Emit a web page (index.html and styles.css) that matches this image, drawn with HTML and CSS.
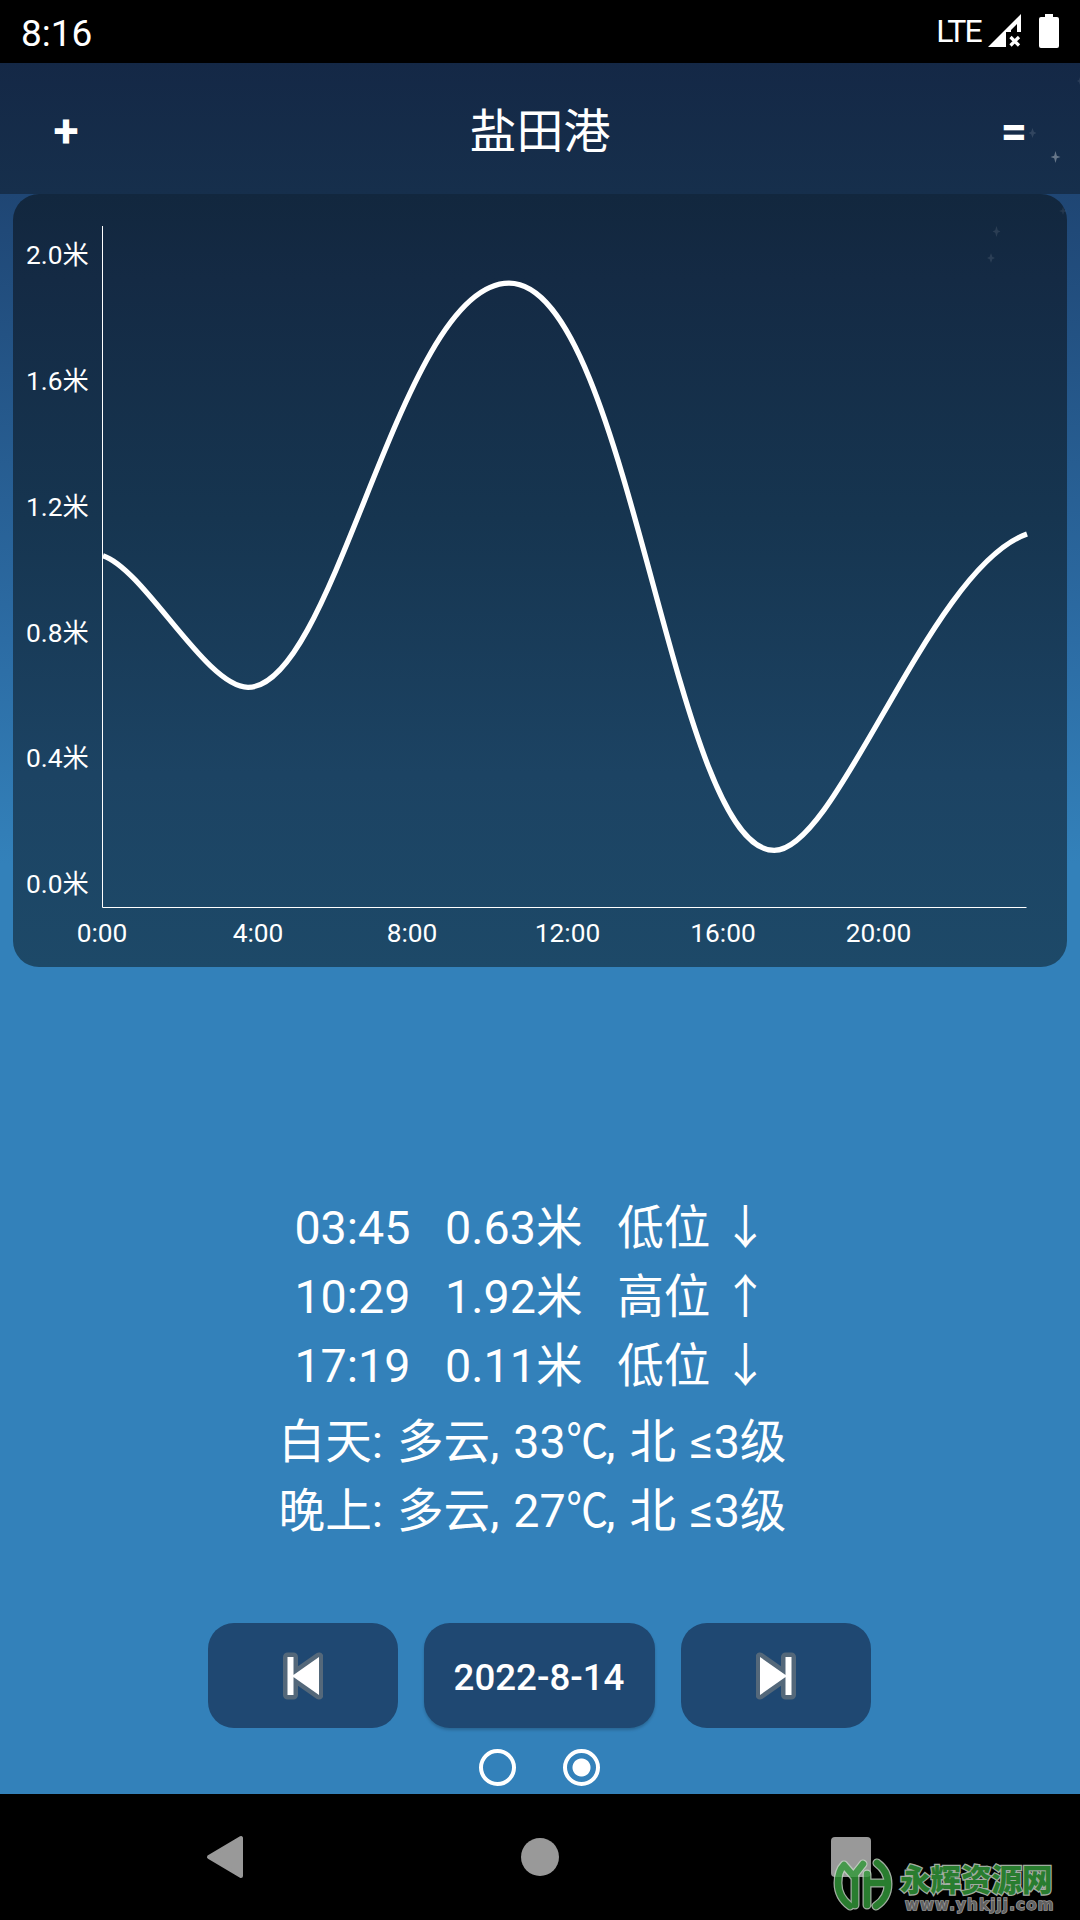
FILE: index.html
```html
<!DOCTYPE html>
<html lang="zh-CN">
<head>
    <meta charset="UTF-8">
    <meta name="viewport" content="width=device-width, initial-scale=1.0">
    <title>盐田港</title>
    <link rel="stylesheet" href="styles.css">
</head>
<body>
    <div class="statusbar">
        <span class="clock">8:16</span>
        <span class="lte">LTE</span>
        <svg class="signal" width="33" height="33" viewBox="0 0 33 33">
            <path d="M0 33L33 0V18H29V10L23 16V18H18V33Z" fill="#fff"/>
            <path d="M22.5 23L31 31.5M31 23L22.5 31.5" stroke="#fff" stroke-width="3.2"/>
        </svg>
        <svg class="battery" width="20" height="34" viewBox="0 0 20 34">
            <path d="M6 0H14V3H18Q20 3 20 5V32Q20 34 18 34H2Q0 34 0 32V5Q0 3 2 3H6Z" fill="#fff"/>
        </svg>
    </div>

    <div class="app">
        <div class="header">
            <button type="button" class="icon-btn">+</button>
            <h1>盐田港</h1>
            <button type="button" class="icon-btn">=</button>
        </div>

        <!-- Tide chart -->
        <div class="chart">
            <svg width="1054" height="773" viewBox="13 194 1054 773">
                <g class="axis">
                    <path d="M102.5 226V907.5H1026.5"/>
                </g>
                <g class="ylabels">
                    <text x="26" y="264">2.0米</text>
                    <text x="26" y="390">1.6米</text>
                    <text x="26" y="516">1.2米</text>
                    <text x="26" y="642">0.8米</text>
                    <text x="26" y="767">0.4米</text>
                    <text x="26" y="893">0.0米</text>
                </g>
                <g class="xlabels">
                    <text x="102" y="942">0:00</text>
                    <text x="258" y="942">4:00</text>
                    <text x="412" y="942">8:00</text>
                    <text x="567.5" y="942">12:00</text>
                    <text x="723" y="942">16:00</text>
                    <text x="878.5" y="942">20:00</text>
                </g>
                <path class="curve" d="M103 555.7C145 570 206 687.3 248 687.3C336 687.3 400 283.2 509 283.2C629 283.2 672 850.4 774.2 850.4C838 850.4 930 568 1027 534"/>
            </svg>
        </div>

        <div class="tides">
            <p>03:45&nbsp;&nbsp; 0.63米&nbsp;&nbsp; 低位 ↓</p>
            <p>10:29&nbsp;&nbsp; 1.92米&nbsp;&nbsp; 高位 ↑</p>
            <p>17:19&nbsp;&nbsp; 0.11米&nbsp;&nbsp; 低位 ↓</p>
        </div>
        <div class="weather">
            <p>白天: 多云, 33<span class="unit">℃</span>, 北 ≤3级</p>
            <p>晚上: 多云, 27<span class="unit">℃</span>, 北 ≤3级</p>
        </div>

        <div class="controls">
            <button type="button" class="btn">
                <svg width="40" height="48" viewBox="0 0 40 48">
                    <path class="halo" d="M4.5 5H10.5V43H4.5ZM9 24L36 5V43Z"/>
                    <path d="M4.5 5H10.5V43H4.5ZM9 24L36 5V43Z" fill="#fff"/>
                </svg>
            </button>
            <button type="button" class="btn date">2022-8-14</button>
            <button type="button" class="btn">
                <svg width="40" height="48" viewBox="0 0 40 48">
                    <path class="halo" d="M35.5 5H29.5V43H35.5ZM31 24L4 5V43Z"/>
                    <path d="M35.5 5H29.5V43H35.5ZM31 24L4 5V43Z" fill="#fff"/>
                </svg>
            </button>
        </div>
        <div class="pager">
            <span class="dot"></span>
            <span class="dot active"></span>
        </div>

        <svg class="stars" width="100" height="230" viewBox="980 63 100 230">
            <g fill="#fff">
                <path opacity=".35" d="M1055.5 151L1056.8 155.7L1060.5 157L1056.8 158.3L1055.5 163L1054.2 158.3L1050.5 157L1054.2 155.7Z"/>
                <path opacity=".12" d="M1032.5 128L1033.8 131.7L1036.5 133L1033.8 134.3L1032.5 138L1031.2 134.3L1028.5 133L1031.2 131.7Z"/>
                <path opacity=".1" d="M996.5 226L997.8 230.2L1000.5 231.5L997.8 232.8L996.5 237L995.2 232.8L992.5 231.5L995.2 230.2Z"/>
                <path opacity=".1" d="M991 253L992.3 256.7L995 258L992.3 259.3L991 263L989.7 259.3L987 258L989.7 256.7Z"/>
                <path opacity=".08" d="M1063 207L1064 210L1067 211L1064 212L1063 215L1062 212L1059 211L1062 210Z"/>
                <path opacity=".1" d="M1080 77L1079 80L1077 81L1079 82L1080 85Z"/>
            </g>
        </svg>
    </div>

    <div class="navbar">
        <svg width="38" height="44" viewBox="0 0 38 44">
            <path d="M3 22L35 3V41Z" fill="#999" stroke="#999" stroke-width="4" stroke-linejoin="round"/>
        </svg>
        <span class="home"></span>
        <span class="recent"></span>
    </div>

    <!-- Site mark in the corner -->
    <div class="sitemark">
        <svg width="62" height="54" viewBox="832 1858 62 54">
            <g class="mark-edge">
                <path d="M850 1906Q838 1897 838 1883Q838 1871 844 1865L853.5 1876L863 1864"/>
                <path d="M855 1877V1905M867 1874V1905M867 1883H886M877 1863Q888 1871 888 1884Q888 1898 876 1906"/>
            </g>
            <g class="mark">
                <path d="M850 1906Q838 1897 838 1883Q838 1871 844 1865L853.5 1876L863 1864"/>
                <path d="M855 1877V1905M867 1874V1905M867 1883H886M877 1863Q888 1871 888 1884Q888 1898 876 1906"/>
            </g>
        </svg>
        <div class="sitename">
            <b>永辉资源网</b>
            <span>www.yhkjjj.com</span>
        </div>
    </div>
</body>
</html>
```
FILE: styles.css
```css
* {
    box-sizing: border-box;
}

body {
    margin: 0;
    width: 1080px;
    height: 1920px;
    overflow: hidden;
    position: relative;
    background: #000;
    color: #fff;
    font-family: Roboto, "Noto Sans CJK SC", sans-serif;
}

h1, p {
    margin: 0;
    font-weight: 400;
}

button {
    border: none;
    color: #fff;
    font-family: inherit;
    padding: 0;
}

svg {
    display: block;
}

.statusbar {
    height: 63px;
    display: flex;
    align-items: flex-start;
    padding: 14px 21px 0 21px;
}

.clock {
    font-size: 37px;
    line-height: 40px;
    margin-right: auto;
}

.lte {
    font-size: 32px;
    line-height: 34px;
    letter-spacing: -1.8px;
    margin-right: 7px;
}

.battery {
    margin-left: 18px;
}

.app {
    height: 1731px;
    position: relative;
    display: flex;
    flex-direction: column;
    background: linear-gradient(#1d3b6b 0, #1f4674 131px, #2c6ca4 577px, #3381ba 800px);
}

.header {
    height: 131px;
    display: flex;
    align-items: center;
    justify-content: space-between;
    padding: 4px 43px 0 43px;
    background: linear-gradient(#142846, #162f4c);
}

.header h1 {
    padding-top: 3px;
    font-size: 47px;
    line-height: 60px;
}

.icon-btn {
    width: 46px;
    background: none;
    font-size: 46px;
    font-weight: 700;
}

.chart {
    height: 773px;
    margin: 0 13px;
    border-radius: 26px;
    background: linear-gradient(#12273e, #142a44 11%, #163550 42%, #1c4363 75%, #1d4968);
}

.axis {
    fill: none;
    stroke: #fff;
    stroke-width: 1;
}

.ylabels,
.xlabels {
    fill: #fff;
    font-size: 26.3px;
}

.xlabels {
    text-anchor: middle;
}

.curve {
    fill: none;
    stroke: #fff;
    stroke-width: 5.3;
}

.tides,
.weather {
    font-size: 46.6px;
    line-height: 69px;
    text-align: center;
    padding-right: 15px;
    white-space: nowrap;
}

.tides {
    margin-top: 227px;
    padding-right: 17px;
}

.weather {
    margin-top: 7px;
    word-spacing: 2.4px;
}

.unit {
    display: inline-block;
    margin: 0 -4px 0 -2px;
    transform: scaleX(.9);
}

.controls {
    display: flex;
    justify-content: center;
    gap: 26px;
    margin-top: 77px;
    padding-right: 2px;
}

.btn {
    width: 190px;
    height: 105px;
    border-radius: 26px;
    background: #1f4872;
    display: flex;
    align-items: center;
    justify-content: center;
}

.date {
    width: 231px;
    padding-top: 3px;
    font-size: 36.7px;
    font-weight: 500;
    box-shadow: 0 2px 3px rgba(0, 0, 0, .2);
}

.halo {
    fill: #54687a;
    stroke: #54687a;
    stroke-width: 9;
    stroke-linejoin: round;
}

.pager {
    display: flex;
    justify-content: center;
    gap: 47px;
    margin-top: 21px;
    padding-right: 1px;
}

.dot {
    width: 37px;
    height: 37px;
    border: 4px solid #fff;
    border-radius: 50%;
}

.active {
    background: radial-gradient(circle, #fff 8.5px, transparent 9.5px);
}

/* faint stars lie over the header and the chart */
.stars {
    position: absolute;
    top: 0;
    right: 0;
}

.navbar {
    height: 126px;
    display: grid;
    grid-template-columns: 315px 310px 40px;
    align-items: center;
    padding-left: 206px;
}

.home {
    width: 38px;
    height: 38px;
    border-radius: 50%;
    background: #999;
}

.recent {
    width: 40px;
    height: 40px;
    border-radius: 4px;
    background: #999;
}

.sitemark {
    position: absolute;
    left: 832px;
    top: 1858px;
    display: flex;
    gap: 6px;
    opacity: .82;
}

.mark-edge,
.mark {
    fill: none;
    stroke: #c4d4c4;
    stroke-width: 9;
    stroke-linecap: round;
    stroke-linejoin: round;
}

.mark {
    stroke: #33993a;
    stroke-width: 6.5;
}

.sitename {
    display: flex;
    flex-direction: column;
    margin-top: 5px;
    white-space: nowrap;
}

.sitename b {
    font-size: 30.5px;
    line-height: 35px;
    font-weight: 900;
    color: #33993a;
    -webkit-text-stroke: 2.5px #c4d4c4;
    paint-order: stroke fill;
}

.sitename span {
    margin-left: 5px;
    font-family: "DejaVu Sans", sans-serif;
    font-size: 15px;
    line-height: 14px;
    font-weight: 700;
    letter-spacing: 1.2px;
    color: #777;
    -webkit-text-stroke: 1.5px #bbb;
    paint-order: stroke fill;
}
```
